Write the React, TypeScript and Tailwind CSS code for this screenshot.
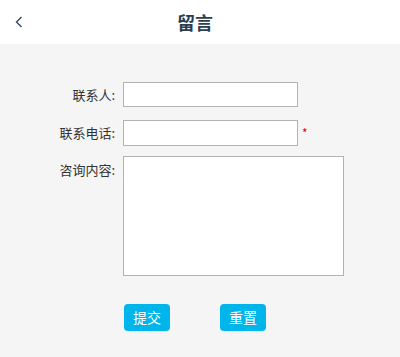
import React, { useState } from 'react';

export default function App() {
  const [name, setName] = useState('');
  const [phone, setPhone] = useState('');
  const [content, setContent] = useState('');

  const handleReset = () => {
    setName('');
    setPhone('');
    setContent('');
  };

  return (
    <div className="min-h-screen bg-[#f5f5f5] font-['Noto_Sans_CJK_SC',sans-serif] text-[#333]">
      <header className="h-[44px] bg-white relative flex items-center justify-center pr-[10px]">
        <button className="absolute left-[12px] top-[13px] w-[14px] h-[18px] flex items-center justify-center text-[#34495e]">
          <svg width="8" height="12" viewBox="0 0 8 12" fill="none">
            <path d="M6.5 1 L1.5 6 L6.5 11" stroke="currentColor" strokeWidth="1.4" />
          </svg>
        </button>
        <h1 className="text-[18px] font-bold text-[#2c3e50] leading-none">留言</h1>
      </header>

      <form className="pt-[38px]" onSubmit={e => e.preventDefault()}>
        <div className="flex items-center gap-2">
          <label className="w-[115px] text-right text-[13px]">联系人:</label>
          <input
            value={name}
            onChange={e => setName(e.target.value)}
            className="w-[175px] h-[25px] bg-white border border-[#b3b3b3] outline-none px-1 text-[13px]"
          />
        </div>
        <div className="flex items-center gap-2 mt-[13px]">
          <label className="w-[115px] text-right text-[13px]">联系电话:</label>
          <input
            value={phone}
            onChange={e => setPhone(e.target.value)}
            className="w-[175px] h-[26px] bg-white border border-[#b3b3b3] outline-none px-1 text-[13px]"
          />
          <span className="text-[#e60012] text-[12px] -ml-[4px]">*</span>
        </div>
        <div className="flex items-start gap-2 mt-[10px]">
          <label className="w-[115px] text-right text-[13px] pt-[4px]">咨询内容:</label>
          <textarea
            value={content}
            onChange={e => setContent(e.target.value)}
            className="w-[221px] h-[120px] bg-white border border-[#b3b3b3] outline-none p-1 text-[13px] resize-none"
          />
        </div>
        <div className="flex gap-[50px] pl-[124px] mt-[28px]">
          <button type="submit" className="w-[46px] h-[27px] rounded-[4px] bg-[#00b5e9] text-white text-[14px]">提交</button>
          <button type="button" onClick={handleReset} className="w-[46px] h-[27px] rounded-[4px] bg-[#00b5e9] text-white text-[14px]">重置</button>
        </div>
      </form>
    </div>
  );
}
